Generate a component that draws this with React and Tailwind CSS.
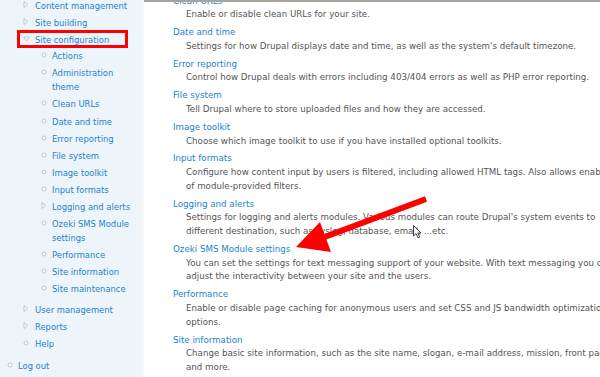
import React from 'react';

const menu = [
  { label: 'Content management', icon: 'collapsed' },
  { label: 'Site building', icon: 'collapsed' },
  {
    label: 'Site configuration',
    icon: 'expanded',
    marked: true,
    children: [
      { label: 'Actions', icon: 'leaf' },
      { label: ['Administration', 'theme'], icon: 'leaf' },
      { label: 'Clean URLs', icon: 'leaf' },
      { label: 'Date and time', icon: 'leaf' },
      { label: 'Error reporting', icon: 'leaf' },
      { label: 'File system', icon: 'leaf' },
      { label: 'Image toolkit', icon: 'leaf' },
      { label: 'Input formats', icon: 'leaf' },
      { label: 'Logging and alerts', icon: 'collapsed' },
      { label: ['Ozeki SMS Module', 'settings'], icon: 'leaf' },
      { label: 'Performance', icon: 'leaf' },
      { label: 'Site information', icon: 'leaf' },
      { label: 'Site maintenance', icon: 'leaf' },
    ],
  },
  { label: 'User management', icon: 'collapsed' },
  { label: 'Reports', icon: 'collapsed' },
  { label: 'Help', icon: 'leaf' },
];

const entries = [
  { title: 'Clean URLs', desc: ['Enable or disable clean URLs for your site.'] },
  { title: 'Date and time', desc: ["Settings for how Drupal displays date and time, as well as the system's default timezone."] },
  { title: 'Error reporting', desc: ['Control how Drupal deals with errors including 403/404 errors as well as PHP error reporting.'] },
  { title: 'File system', desc: ['Tell Drupal where to store uploaded files and how they are accessed.'] },
  { title: 'Image toolkit', desc: ['Choose which image toolkit to use if you have installed optional toolkits.'] },
  {
    title: 'Input formats',
    desc: ['Configure how content input by users is filtered, including allowed HTML tags. Also allows enabling', 'of module-provided filters.'],
  },
  {
    title: 'Logging and alerts',
    desc: ["Settings for logging and alerts modules. Various modules can route Drupal's system events to", 'different destination, such as syslog, database, email, ...etc.'],
  },
  {
    title: 'Ozeki SMS Module settings',
    desc: ['You can set the settings for text messaging support of your website. With text messaging you can', 'adjust the interactivity between your site and the users.'],
  },
  {
    title: 'Performance',
    desc: ['Enable or disable page caching for anonymous users and set CSS and JS bandwidth optimization', 'options.'],
  },
  {
    title: 'Site information',
    desc: ['Change basic site information, such as the site name, slogan, e-mail address, mission, front page', 'and more.'],
  },
];

function Bullet({ type }) {
  if (type === 'leaf') {
    return (
      <svg width="6" height="6" viewBox="0 0 6 6" className="mt-[3px]">
        <circle cx="3" cy="3" r="2" fill="#ffffff" stroke="#bcc3ca" strokeWidth="1" />
      </svg>
    );
  }
  if (type === 'expanded') {
    return (
      <svg width="7" height="6" viewBox="0 0 7 6" className="mt-[3px]">
        <path d="M0.5 1 L6.5 1 L3.5 5 Z" fill="#f4f6f8" stroke="#c2c8ce" strokeWidth="1" />
      </svg>
    );
  }
  return (
    <svg width="6" height="7" viewBox="0 0 6 7" className="mt-[2px]">
      <path d="M1 0.5 L5 3.5 L1 6.5 Z" fill="#f4f6f8" stroke="#c2c8ce" strokeWidth="1" />
    </svg>
  );
}

function MenuRow({ item, iconWidth }) {
  const lines = Array.isArray(item.label) ? item.label : [item.label];
  return (
    <div className="flex items-start">
      <span className={`${iconWidth} shrink-0 flex`}>
        <Bullet type={item.icon} />
      </span>
      <span className="relative text-[#2283cb]">
        {lines.map((l, i) => (
          <span key={i} className="block whitespace-nowrap">{l}</span>
        ))}
        {item.marked && (
          <span className="absolute left-[-18px] top-[-3px] w-[111px] h-[18px] border-[3px] border-[#ff0000]" />
        )}
      </span>
    </div>
  );
}

function Sidebar() {
  return (
    <aside className="w-[141px] shrink-0 bg-[#edf5fa] text-[8.4px] leading-[14px]">
      <ul className="-mt-[1px] pl-[23px] pb-[5px]">
        {menu.map((item) => (
          <li key={item.label} className={item.children ? '' : 'pb-[3px]'}>
            <div className={item.children ? 'pb-[2.3px]' : ''}>
              <MenuRow item={item} iconWidth="w-[12px]" />
            </div>
            {item.children && (
              <ul className="pl-[18px] pb-[3px]">
                {item.children.map((child) => (
                  <li key={String(child.label)} className="pb-[3.1px]">
                    <MenuRow item={child} iconWidth="w-[11px]" />
                  </li>
                ))}
              </ul>
            )}
          </li>
        ))}
      </ul>
      <ul className="pl-[7px]">
        <li>
          <MenuRow item={{ label: 'Log out', icon: 'leaf' }} iconWidth="w-[11px]" />
        </li>
      </ul>
    </aside>
  );
}

export default function App() {
  return (
    <div className="relative w-[600px] h-[377px] overflow-hidden flex bg-white font-['DejaVu_Sans','Liberation_Sans',sans-serif]">
      <Sidebar />
      <div className="w-[3px] shrink-0 bg-[#f4f8fb]" />
      <main className="flex-1 overflow-hidden border-t-2 border-[#a6a49d] text-[8.7px] leading-[13.7px]">
        <dl className="-mt-[7.5px] pl-[29px]">
          {entries.map((e) => (
            <div key={e.title} className="pb-[4.2px]">
              <dt className="text-[#2283cb] whitespace-nowrap">{e.title}</dt>
              <dd className="pl-[13px] text-[#555555]">
                {e.desc.map((d, i) => (
                  <div key={i} className="whitespace-nowrap">{d}</div>
                ))}
              </dd>
            </div>
          ))}
        </dl>
      </main>

      <svg className="absolute inset-0 pointer-events-none" width="600" height="377" viewBox="0 0 600 377">
        <line x1="426" y1="199" x2="322" y2="238" stroke="#ff0000" strokeWidth="6" />
        <path d="M296 247 L320 222 L331 252 Z" fill="#ff0000" />
        <g transform="translate(413 225)">
          <path d="M0.5 0.5 L0.5 11 L3 8.6 L5 12.8 L6.8 12 L4.8 8 L8 8 Z" fill="#ffffff" stroke="#222222" strokeWidth="1" strokeLinejoin="round" opacity="0.85" />
        </g>
      </svg>
    </div>
  );
}
